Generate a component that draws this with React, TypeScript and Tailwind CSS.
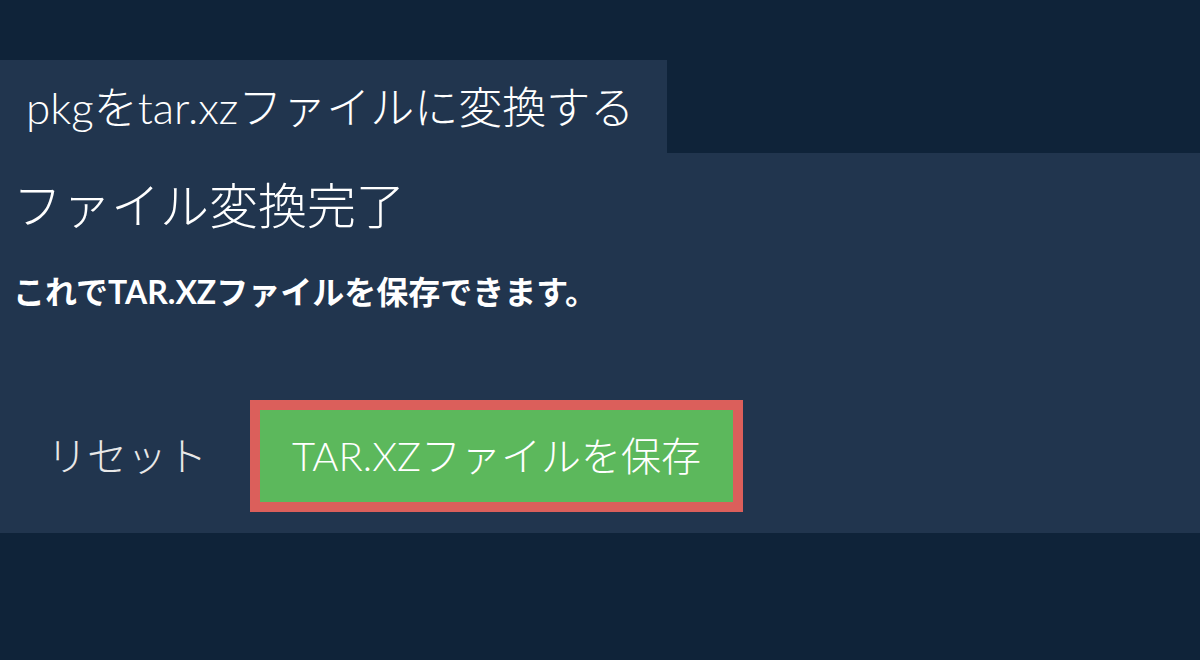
export default function App() {
  return (
    <div
      className="h-[660px] w-[1200px] bg-[#0f2339] pt-[60px] text-white"
      style={{ fontFamily: 'Lato, "Noto Sans CJK JP", sans-serif' }}
    >
      <div className="flex h-[93px] w-[667px] items-center bg-[#21354e] pl-[26px]">
        <h1 className="text-[44px] font-light leading-none">pkgをtar.xzファイルに変換する</h1>
      </div>
      <div className="h-[380px] bg-[#21354e] px-[13px] pt-[23px]">
        <h2 className="text-[49px] font-light leading-[58px]">ファイル変換完了</h2>
        <p className="mt-[40px] text-[32px] font-bold leading-[36px]">
          これでTAR.XZファイルを保存できます。
        </p>
        <div className="mt-[90px] flex items-center gap-[10px]">
          <button className="pl-[34px] pr-[33px] text-[40px] font-light text-[#e8e8e8]">リセット</button>
          <button className="flex h-[112px] w-[493px] items-center justify-center border-[10px] border-[#db5f5b] bg-[#5cb85c] text-[40px] font-light">
            TAR.XZファイルを保存
          </button>
        </div>
      </div>
    </div>
  );
}
